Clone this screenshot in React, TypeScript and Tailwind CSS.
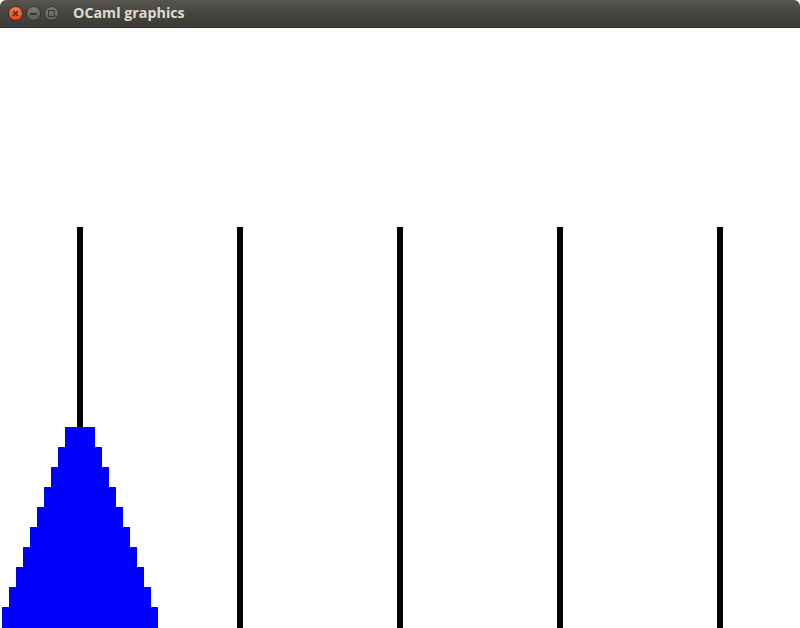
import React from "react";

const PEGS = [80, 240, 400, 560, 720];
const DISCS = Array.from({ length: 10 }, (_, i) => i);

function TitleBar() {
  return (
    <div className="h-[28px] flex items-center rounded-t-[6px] bg-gradient-to-b from-[#57554f] via-[#45443f] to-[#3c3b37] border-b border-[#2f2e2b]">
      <div className="flex items-center gap-[3px] pl-[8px]">
        <div className="w-[15px] h-[15px] rounded-full bg-gradient-to-b from-[#f7794c] to-[#e2491c] border border-[#3a2a22] flex items-center justify-center">
          <svg width="7" height="7" viewBox="0 0 7 7">
            <path d="M1 1L6 6M6 1L1 6" stroke="#4a2416" strokeWidth="1.4" />
          </svg>
        </div>
        <div className="w-[15px] h-[15px] rounded-full bg-gradient-to-b from-[#7d7b75] to-[#5f5d57] border border-[#33322e] flex items-center justify-center">
          <div className="w-[7px] h-[2px] bg-[#3a3935]" />
        </div>
        <div className="w-[15px] h-[15px] rounded-full bg-gradient-to-b from-[#7d7b75] to-[#5f5d57] border border-[#33322e] flex items-center justify-center">
          <div className="w-[7px] h-[7px] border-[1.5px] border-[#3a3935]" />
        </div>
      </div>
      <span className="ml-[14px] text-[14.3px] font-bold text-[#dfdbd2] font-['Open_Sans',sans-serif] leading-none">
        OCaml graphics
      </span>
    </div>
  );
}

export default function App() {
  return (
    <div className="w-[800px] h-[628px] bg-white flex flex-col overflow-hidden">
      <TitleBar />
      <div className="flex-1 bg-white">
        <svg width="800" height="600" viewBox="0 0 800 600" shapeRendering="crispEdges">
          {PEGS.map((x) => (
            <rect key={x} x={x - 3} y={199} width={6} height={401} fill="#000" />
          ))}
          {DISCS.map((i) => (
            <rect
              key={i}
              x={65 - 7 * i}
              y={399 + 20 * i}
              width={30 + 14 * i}
              height={i === 9 ? 21 : 20}
              fill="#0000ff"
            />
          ))}
        </svg>
      </div>
    </div>
  );
}
